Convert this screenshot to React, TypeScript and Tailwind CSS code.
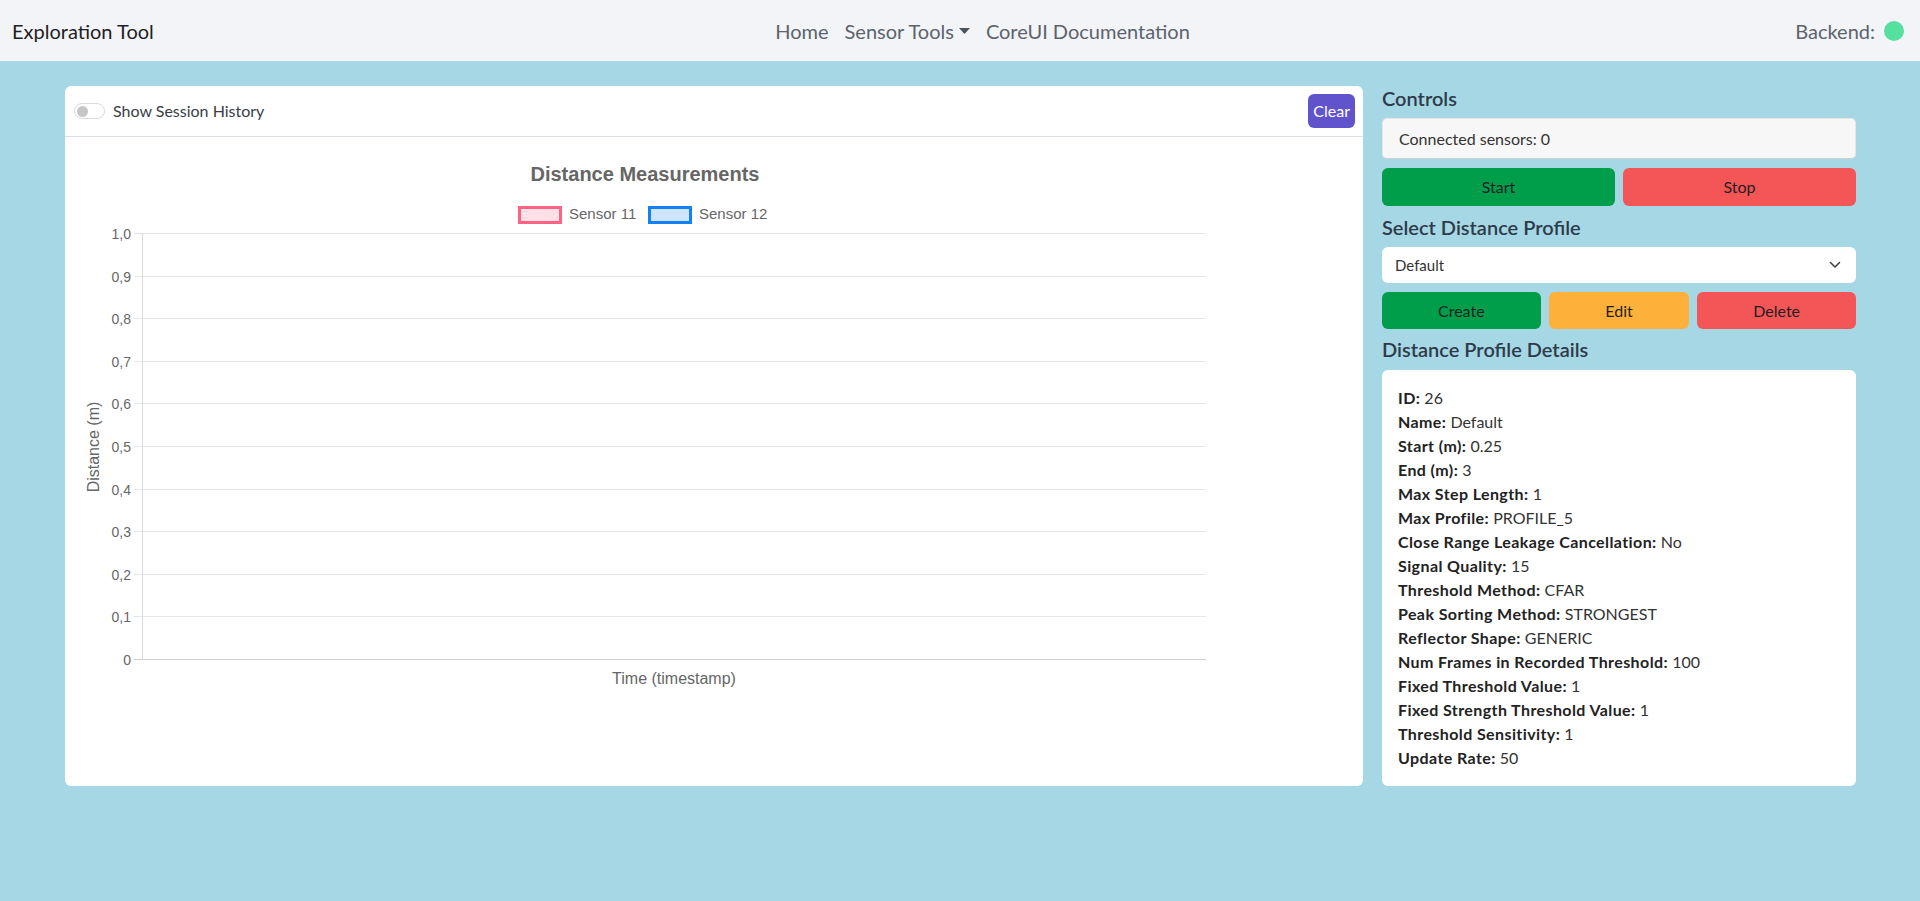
import React from 'react';

const ui = { fontFamily: "'Segoe UI', Lato, 'Noto Sans', sans-serif" };
const chartFont = "'Liberation Sans', Arial, sans-serif";

const profile: [string, string][] = [
  ['ID', '26'],
  ['Name', 'Default'],
  ['Start (m)', '0.25'],
  ['End (m)', '3'],
  ['Max Step Length', '1'],
  ['Max Profile', 'PROFILE_5'],
  ['Close Range Leakage Cancellation', 'No'],
  ['Signal Quality', '15'],
  ['Threshold Method', 'CFAR'],
  ['Peak Sorting Method', 'STRONGEST'],
  ['Reflector Shape', 'GENERIC'],
  ['Num Frames in Recorded Threshold', '100'],
  ['Fixed Threshold Value', '1'],
  ['Fixed Strength Threshold Value', '1'],
  ['Threshold Sensitivity', '1'],
  ['Update Rate', '50'],
];

const ticks = ['0', '0,1', '0,2', '0,3', '0,4', '0,5', '0,6', '0,7', '0,8', '0,9', '1,0'];

const Navbar: React.FC = () => (
  <nav className="h-[61px] bg-[#f3f4f7] flex items-center pl-3 pr-4" style={ui}>
    <span className="text-[20px] text-[#1d2125] mr-4">Exploration Tool</span>
    <div className="mx-auto flex items-center text-[20px] text-[#5b636d]">
      <a className="px-2">Home</a>
      <a className="px-2 flex items-center">
        Sensor Tools
        <svg width="11" height="6" viewBox="0 0 11 6" className="ml-[5px] mt-[1px]">
          <path d="M0 0 L11 0 L5.5 6 Z" fill="#4b535d" />
        </svg>
      </a>
      <a className="px-2">CoreUI Documentation</a>
    </div>
    <div className="flex items-center text-[20px] text-[#5b636d]">
      <span>Backend:</span>
      <span className="ml-[9px] w-5 h-5 rounded-full bg-[#57df9f]"></span>
    </div>
  </nav>
);

const Chart: React.FC = () => {
  const y0 = 522;
  const step = 42.6;
  return (
    <svg width="1298" height="649" viewBox="0 0 1298 649" className="block" style={{ fontFamily: chartFont }}>
      <text x="580" y="44" textAnchor="middle" fontSize="20" fontWeight="bold" fill="#666">
        Distance Measurements
      </text>
      {/* legend */}
      <rect x="454.5" y="70.5" width="41" height="15" fill="#ffe0e6" stroke="#ff6384" strokeWidth="3" />
      <text x="504" y="82" fontSize="15" fill="#666">Sensor 11</text>
      <rect x="584.5" y="70.5" width="41" height="15" fill="#cfe5fd" stroke="#1380f4" strokeWidth="3" />
      <text x="634" y="82" fontSize="15" fill="#666">Sensor 12</text>
      {/* grid */}
      {ticks.map((t, i) => {
        const y = Math.round(y0 - i * step) + 0.5;
        return (
          <g key={t}>
            <line x1="69" x2="1141" y1={y} y2={y} stroke={i === 0 ? '#d0d0d0' : '#e6e6e6'} strokeWidth="1" />
            <text x="66" y={y + 5} textAnchor="end" fontSize="14" fill="#666">{t}</text>
          </g>
        );
      })}
      <line x1="77.5" x2="77.5" y1="96" y2="522" stroke="#dadada" strokeWidth="1" />
      <text x="0" y="0" fontSize="16" fill="#666" textAnchor="middle" transform="translate(34 310) rotate(-90)">
        Distance (m)
      </text>
      <text x="609" y="547" fontSize="16" fill="#666" textAnchor="middle">Time (timestamp)</text>
    </svg>
  );
};

export default function App() {
  return (
    <div className="min-h-[901px] bg-[#a5d8e4]" style={ui}>
      <Navbar />
      <div className="flex items-stretch pt-[25px] pl-[65px] pr-[64px] gap-[19px]">
        {/* chart card */}
        <div className="w-[1298px] bg-white rounded-md overflow-hidden">
          <div className="h-[51px] border-b border-[#dbdfe6] flex items-center pl-[9px] pr-2">
            <span className="w-[31px] h-4 rounded-full border border-[#d9dadc] bg-white flex items-center px-[2px]">
              <span className="w-[11px] h-[11px] rounded-full bg-[#c6c6c6]"></span>
            </span>
            <span className="ml-2 text-[16px] text-[#393e46]">Show Session History</span>
            <button className="ml-auto h-[34px] px-[5px] rounded-md bg-[#6153cc] text-white text-[16px]">Clear</button>
          </div>
          <Chart />
        </div>

        {/* controls */}
        <div className="w-[474px] flex flex-col">
          <h2 className="text-[20px] leading-6 font-semibold text-[#2f3a4a] mb-2">Controls</h2>
          <div className="h-[41px] rounded-[5px] bg-[#f7f7f7] border border-[#e6e6e6] border-b-[#cfcfcf] flex items-center px-4 text-[16px] text-[#333]">
            Connected sensors: 0
          </div>
          <div className="grid grid-cols-2 gap-2 mt-[9px]">
            <button className="h-[38px] rounded-md bg-[#009e4b] text-[16px] text-[#1f1f1f]">Start</button>
            <button className="h-[38px] rounded-md bg-[#f45556] text-[16px] text-[#1f1f1f]">Stop</button>
          </div>
          <h2 className="text-[20px] leading-6 font-semibold text-[#2f3a4a] mt-[9px] mb-2">Select Distance Profile</h2>
          <div className="h-9 rounded-md bg-white flex items-center pl-[13px] pr-[15px] text-[15px] text-[#333]">
            <span>Default</span>
            <svg width="12" height="8" viewBox="0 0 12 8" className="ml-auto">
              <path d="M1.5 1.5 L6 6 L10.5 1.5" fill="none" stroke="#444" strokeWidth="1.6" strokeLinecap="round" strokeLinejoin="round" />
            </svg>
          </div>
          <div className="grid grid-cols-[159fr_141fr_159fr] gap-2 mt-[9px]">
            <button className="h-[37px] rounded-md bg-[#009e4b] text-[16px] text-[#1f1f1f]">Create</button>
            <button className="h-[37px] rounded-md bg-[#fdb13b] text-[16px] text-[#1f1f1f]">Edit</button>
            <button className="h-[37px] rounded-md bg-[#f45556] text-[16px] text-[#1f1f1f]">Delete</button>
          </div>
          <h2 className="text-[20px] leading-6 font-semibold text-[#2f3a4a] mt-2 mb-[9px]">Distance Profile Details</h2>
          <div className="flex-1 bg-white rounded-md px-4 pt-[16px] pb-[11px] text-[16px] leading-6 text-[#333]">
            {profile.map(([k, v]) => (
              <div key={k}>
                <span className="font-bold text-[#222] tracking-[0.4px]">{k}:</span> {v}
              </div>
            ))}
          </div>
        </div>
      </div>
    </div>
  );
}
